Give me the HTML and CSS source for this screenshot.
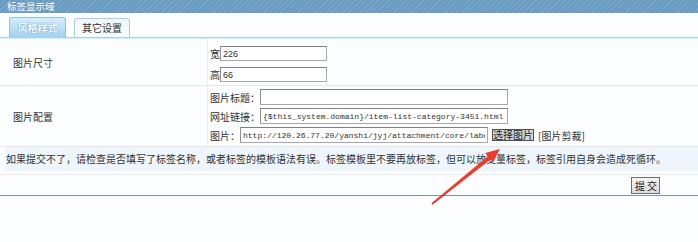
FILE: index.html
```html
<!DOCTYPE html>
<html lang="zh-CN">
<head>
	<meta charset="UTF-8">
	<title>标签显示域</title>
	<link rel="stylesheet" href="styles.css">
</head>
<body>
<div class="caption">标签显示域</div>
<div class="tabs">
	<span class="tab current">风格样式</span>
	<span class="tab">其它设置</span>
</div>
<table class="form">
	<tr class="size-row">
		<th>图片尺寸</th>
		<td>
			<div class="line">宽<input class="num" type="text" value="226"></div>
			<div class="line">高<input class="num" type="text" value="66"></div>
		</td>
	</tr>
	<tr class="pic-row">
		<th>图片配置</th>
		<td>
			<div class="line">图片标题：<input class="wide" type="text" value=""></div>
			<div class="line">网址链接：<input class="wide mono" type="text" value="{$this_system.domain}/item-list-category-3451.html"></div>
			<div class="line">图片：<input class="wide mono" type="text" value="http://120.26.77.20/yanshi/jyj/attachment/core/label/"><button class="pick">选择图片</button><a class="crop">[图片剪裁]</a></div>
		</td>
	</tr>
</table>
<div class="notice-wrap">
	<p class="notice">如果提交不了，请检查是否填写了标签名称，或者标签的模板语法有误。标签模板里不要再放标签，但可以放变量标签，标签引用自身会造成死循环。</p>
</div>
<div class="submit-bar"><button class="submit">提交</button></div>

<svg class="arrow" width="698" height="242" viewBox="0 0 698 242">
	<polygon points="431.4,203.2 487.8,156.2 485.3,153.1 500,149 492.9,162.5 490.4,159.4 432.6,204.8" fill="#ec3b2e"/>
</svg>
</body>
</html>
```

FILE: styles.css
```css
html, body { height: 100%; }

body {
	margin: 0;
	font-size: 10px;
	font-family: "Noto Sans CJK SC", "Liberation Sans", sans-serif;
	color: #333;
	background: #fcfdfe;
	position: relative;
}

.caption {
	height: 13px;
	line-height: 13px;
	font-size: 9.5px;
	padding-left: 7px;
	color: #fff;
	background-color: #6a9bc0;
	background-image: repeating-linear-gradient(135deg, #6a9bc0 0, #6a9bc0 3px, #7ba8ca 3px, #7ba8ca 4px);
}

.tabs {
	height: 24px;
	display: flex;
	align-items: flex-end;
	gap: 8px;
	padding-left: 9px;
	border-bottom: 1px solid #a6d2ee;
	box-shadow: 0 1px 0 #d8ecf8;
	margin-bottom: 1px;
}

.tab {
	width: 54px;
	height: 18px;
	line-height: 18px;
	text-align: center;
	border: 1px solid #a9cde6;
	border-bottom: none;
	border-radius: 3px 3px 0 0;
	background: linear-gradient(#f0f7fc, #f9fcfe);
	color: #333;
}

.tab.current {
	width: 55px;
	height: 19px;
	line-height: 19px;
	font-weight: bold;
	color: #fff;
	border-color: #8dc3e6;
	background: linear-gradient(#d6eefb, #a2d2f1);
	text-shadow: 0 0 1px #4a97cf, 0 0 1px #4a97cf;
}

.form {
	width: 100%;
	border-collapse: collapse;
}

.form th {
	width: 194px;
	padding: 0 0 0 13px;
	text-align: left;
	font-weight: normal;
	border-right: 1px solid #ececec;
	border-bottom: 1px solid #e6e6e6;
}

.form td {
	padding: 0 2px;
	border-bottom: 1px solid #e6e6e6;
}

.size-row td { padding-top: 7px; padding-bottom: 3px; }

.size-row .line { height: 15px; }
.size-row .line + .line { margin-top: 6px; }

.pic-row td { padding-top: 3px; padding-bottom: 3px; }

.line {
	display: flex;
	align-items: center;
	height: 16px;
	white-space: nowrap;
}

.line + .line { margin-top: 3px; }

input {
	box-sizing: border-box;
	margin: 0;
	padding: 0 2px;
	border: 1px solid #a8a8a8;
	border-top-color: #808080;
	border-left-color: #909090;
	background: #fff;
	color: #333;
}

.num {
	width: 107px;
	height: 15px;
	font: 9px "Liberation Sans", sans-serif;
}

.wide {
	width: 248px;
	height: 16px;
	font: 10px "Liberation Sans", sans-serif;
}

.mono {
	font: 8.1px "Liberation Mono", monospace;
	letter-spacing: -0.05px;
}

.pick {
	margin: 0 0 0 4px;
	padding: 0;
	height: 12px;
	font: 10px/10px "Noto Sans CJK SC", sans-serif;
	color: #222;
	background: #d6d6d6;
	border: 1px solid #505050;
}

.crop {
	margin-left: 4px;
	color: #333;
}

.notice-wrap {
	padding-bottom: 3px;
	border-bottom: 1px solid #ececec;
}

.notice {
	margin: 0 0 0 5px;
	height: 24px;
	line-height: 24px;
	padding-left: 1px;
	background: #eef6fb;
	white-space: nowrap;
}

.submit-bar {
	height: 20px;
	display: flex;
	justify-content: flex-end;
	padding-right: 38px;
	border-bottom: 1px solid #7393b8;
}

.submit {
	margin-top: 2px;
	height: 17px;
	padding: 0 0 0 3px;
	white-space: nowrap;
	font: 10px/14px "Noto Sans CJK SC", sans-serif;
	letter-spacing: 2px;
	color: #222;
	border: 1px solid #6e6e6e;
	background: linear-gradient(#f4f4f4, #dadada);
}

.arrow {
	position: absolute;
	left: 0;
	top: 0;
	pointer-events: none;
}
```
